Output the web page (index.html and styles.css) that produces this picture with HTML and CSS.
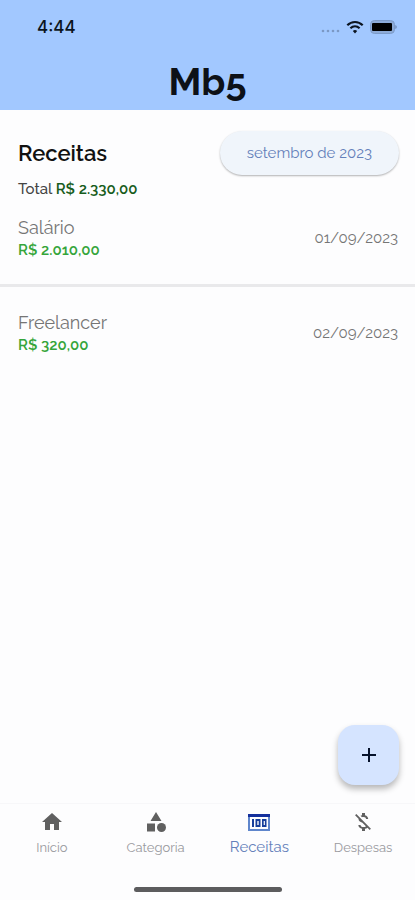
FILE: index.html
```html
<!DOCTYPE html>
<html lang="pt-BR">
<head>
    <meta charset="UTF-8">
    <meta name="viewport" content="width=device-width, initial-scale=1.0">
    <title>Mb5 - Receitas</title>
    <link rel="stylesheet" href="styles.css">
</head>
<body>
    <header class="header">
        <div class="status-bar">
            <span class="time">4:44</span>
            <div class="status-icons">
                <svg width="19" height="4" viewBox="0 0 19 4" fill="#7b98c4">
                    <circle cx="2" cy="2" r="1.3"/>
                    <circle cx="7" cy="2" r="1.3"/>
                    <circle cx="12" cy="2" r="1.3"/>
                    <circle cx="17" cy="2" r="1.3"/>
                </svg>
                <svg class="wifi" width="18" height="14" viewBox="0 0 18 14" fill="none" stroke="#0b1420" stroke-width="2.2">
                    <path d="M1.3 5.2C5.7.9 12.3.9 16.7 5.2"/>
                    <path d="M4.4 8.3c2.7-2.5 6.5-2.5 9.2 0"/>
                    <path d="M9 13.4l-2.2-2.5c1.3-1.1 3.1-1.1 4.4 0z" fill="#0b1420" stroke="none"/>
                </svg>
                <svg width="27" height="14" viewBox="0 0 27 14">
                    <rect x="0.5" y="0.5" width="24" height="13" rx="4" fill="#8dabd8" stroke="#7c9bc9"/>
                    <rect x="2" y="3" width="20" height="8" rx="1" fill="#000"/>
                    <path d="M25.5 5v4c1.4-.7 1.4-3.3 0-4z" fill="#5c7398"/>
                </svg>
            </div>
        </div>
        <h1 class="title">Mb5</h1>
    </header>

    <main class="content">
        <section class="summary">
            <div class="summary-row">
                <h2 class="summary-title">Receitas</h2>
                <button class="month-button" type="button">setembro de 2023</button>
            </div>
            <p class="total">Total <strong>R$ 2.330,00</strong></p>
        </section>

        <ul class="list">
            <li class="item">
                <div class="item-info">
                    <span class="item-name">Salário</span>
                    <span class="item-value">R$ 2.010,00</span>
                </div>
                <time class="item-date" datetime="2023-09-01">01/09/2023</time>
            </li>
            <li class="item">
                <div class="item-info">
                    <span class="item-name">Freelancer</span>
                    <span class="item-value">R$ 320,00</span>
                </div>
                <time class="item-date" datetime="2023-09-02">02/09/2023</time>
            </li>
        </ul>
    </main>

    <footer class="footer">
        <button class="add-button" type="button" aria-label="Adicionar receita">
            <svg width="16" height="16" viewBox="0 0 16 16" stroke="#06122b" stroke-width="2">
                <path d="M8 1v14M1 8h14"/>
            </svg>
        </button>
        <nav class="tabs">
            <a class="tab" href="#">
                <svg width="24" height="24" viewBox="0 0 24 24"><path d="M10 20v-6h4v6h5v-8h3L12 3 2 12h3v8z"/></svg>
                <span>Início</span>
            </a>
            <a class="tab" href="#">
                <svg width="24" height="24" viewBox="0 0 24 24"><path d="M12 2l-5.5 9h11zM3 13.5h8v8H3z"/><circle cx="17.5" cy="17.5" r="4.5"/></svg>
                <span>Categoria</span>
            </a>
            <a class="tab active" href="#">
                <svg width="24" height="24" viewBox="0 0 24 24">
                    <path fill="#5f86cc" fill-rule="evenodd" d="M1 4h22v17H1zM3 7v12h18V7z"/>
                    <path fill="#14309c" d="M1 4h22v3H1z"/>
                    <path d="M5 9h2v8H5z"/>
                    <path fill-rule="evenodd" d="M8.5 9h5v8h-5zM10.3 11v4h1.4v-4zM15 9h4.5v8H15zM16.7 11v4h1.2v-4z"/>
                </svg>
                <span>Receitas</span>
            </a>
            <a class="tab" href="#">
                <svg width="24" height="24" viewBox="0 0 24 24"><path d="M12.5 6.9c1.78 0 2.44.85 2.5 2.1h2.21c-.07-1.72-1.12-3.3-3.21-3.81V3h-3v2.16c-.53.12-1.03.3-1.48.54l1.47 1.47c.41-.17.91-.27 1.51-.27zM5.33 4.06L4.06 5.33 7.5 8.77c0 2.08 1.56 3.21 3.91 3.91l3.51 3.51c-.34.48-1.05.91-2.42.91-2.06 0-2.87-.92-2.98-2.1h-2.2c.12 2.19 1.76 3.42 3.68 3.83V21h3v-2.15c.96-.18 1.82-.55 2.45-1.12l2.22 2.22 1.27-1.27z"/></svg>
                <span>Despesas</span>
            </a>
        </nav>
        <div class="home-indicator"></div>
    </footer>
</body>
</html>
```

FILE: styles.css
```css
* {
    box-sizing: border-box;
}

body {
    margin: 0;
    min-height: 100vh;
    display: flex;
    flex-direction: column;
    background: #fdfdfe;
    color: #757575;
    font-family: 'Raleway', 'Open Sans', sans-serif;
    font-size: 15px;
    line-height: 20px;
}

/* Topo */
.header {
    background: #a2c8ff;
    padding: 16px 18px 4px;
}

.status-bar {
    display: flex;
    justify-content: space-between;
    align-items: center;
    height: 22px;
    padding-left: 19px;
}

.time {
    color: #0b1420;
    font-family: 'Inter', sans-serif;
    font-size: 17px;
    font-weight: 500;
}

.status-icons {
    display: flex;
    align-items: center;
    gap: 6px;
}

.status-icons svg:first-child {
    margin-top: 8px;
}

.title {
    margin: 20px 0 0;
    color: #0d1117;
    font-size: 38px;
    font-weight: 700;
    line-height: 48px;
    text-align: center;
}

/* Resumo do mês */
.content {
    flex: 1;
}

.summary {
    padding: 21px 16px 0 18px;
}

.summary-row {
    display: flex;
    justify-content: space-between;
    align-items: center;
}

.summary-title {
    margin: 0;
    color: #111;
    font-size: 22px;
    font-weight: 600;
    line-height: 24px;
}

.month-button {
    height: 44px;
    padding: 0 27px;
    border: none;
    border-radius: 22px;
    background: #f0f5fb;
    box-shadow: 0 1px 2px rgba(0, 0, 0, 0.3);
    color: #6480ba;
    font-family: inherit;
    font-size: 15px;
    cursor: pointer;
}

.total {
    margin: 4px 0 0;
    color: #444;
    font-weight: 500;
}

.total strong {
    color: #175c1c;
    font-weight: 600;
}

/* Lista de receitas */
.list {
    margin: 0;
    padding: 0;
    list-style: none;
}

.item {
    display: flex;
    justify-content: space-between;
    align-items: center;
    padding: 17px 17px 24px 18px;
}

.item + .item {
    border-top: 3px solid #e9e9eb;
    padding-top: 24px;
}

.item-info {
    display: flex;
    flex-direction: column;
}

.item-name {
    font-size: 18px;
    line-height: 24px;
}

.item-value {
    color: #35a53a;
    font-weight: 600;
}

/* Rodapé */
.footer {
    position: sticky;
    bottom: 0;
    padding-bottom: 8px;
    border-top: 1px solid #f7f7f9;
    background: #fdfdfe;
}

.add-button {
    position: absolute;
    right: 16px;
    bottom: 115px;
    display: flex;
    align-items: center;
    justify-content: center;
    width: 61px;
    height: 60px;
    padding: 0;
    border: none;
    border-radius: 17px;
    background: #d5e4ff;
    box-shadow: 0 4px 6px rgba(0, 0, 0, 0.28);
    cursor: pointer;
}

.tabs {
    display: flex;
    padding: 6px 0 30px;
}

.tab {
    flex: 1;
    display: flex;
    flex-direction: column;
    align-items: center;
    gap: 5px;
    color: #9a9a9e;
    font-size: 13px;
    line-height: 18px;
    text-decoration: none;
}

.tab svg {
    fill: #606060;
}

.tab.active {
    color: #6480ba;
    font-size: 15px;
    line-height: 16px;
}

.tab.active svg {
    fill: #173f9b;
}

.home-indicator {
    width: 148px;
    height: 5px;
    margin: 0 auto;
    border-radius: 3px;
    background: #5c5c5e;
}
```
